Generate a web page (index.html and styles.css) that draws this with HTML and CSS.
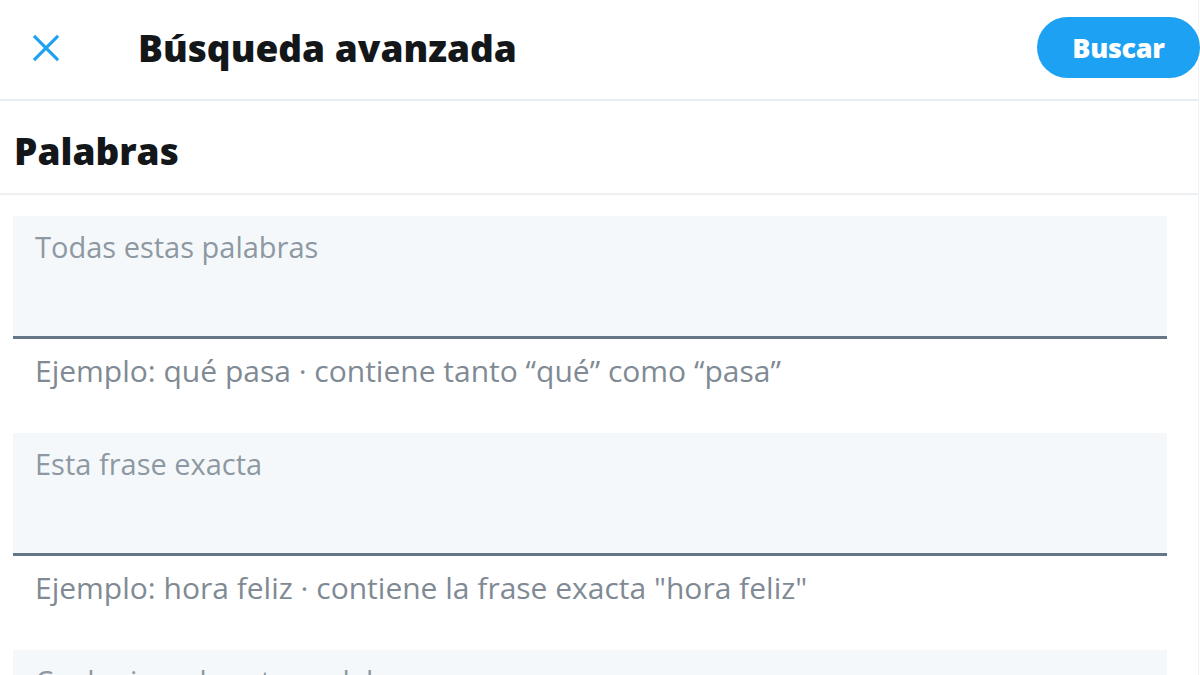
FILE: index.html
```html
<!DOCTYPE html>
<html lang="es">
<head>
  <meta charset="UTF-8" />
  <meta name="viewport" content="width=device-width, initial-scale=1.0"/>
  <title>Búsqueda avanzada</title>
  <link rel="stylesheet" href="styles.css">
</head>
<body>

<div class="container">
  <!-- Top bar -->
  <div class="topbar">
    <button class="close" type="button" aria-label="Cerrar">
      <svg viewBox="0 0 24 24" width="34" height="34">
        <path d="M3.5 3.5 L20.5 20.5 M20.5 3.5 L3.5 20.5" />
      </svg>
    </button>
    <h1 class="title">Búsqueda avanzada</h1>
    <button class="search-btn" type="submit">Buscar</button>
  </div>

  <h2 class="section-title">Palabras</h2>

  <form class="fields">
    <div class="field">
      <label class="field-box">
        <span class="field-label">Todas estas palabras</span>
        <input type="text" name="all">
      </label>
      <p class="hint">Ejemplo: qué pasa · contiene tanto “qué” como “pasa”</p>
    </div>
    <div class="field">
      <label class="field-box">
        <span class="field-label">Esta frase exacta</span>
        <input type="text" name="phrase">
      </label>
      <p class="hint">Ejemplo: hora feliz · contiene la frase exacta "hora feliz"</p>
    </div>
    <div class="field">
      <label class="field-box">
        <span class="field-label">Cualquiera de estas palabras</span>
        <input type="text" name="any">
      </label>
    </div>
  </form>
</div>

</body>
</html>
```

FILE: styles.css
```css
body {
  font-family: "Open Sans", "Noto Sans", sans-serif;
  background-color: #fff;
  margin: 0;
  padding: 0;
  color: #14171a;
  overflow: hidden;
}
.container {
  width: 1198px;
  height: 675px;
  border-right: 1px solid #f0f3f5;
}
.topbar {
  display: flex;
  align-items: center;
  height: 99px;
  padding: 0 0 0 24px;
  border-bottom: 2px solid #e6ecf0;
}
.close {
  background: none;
  border: none;
  padding: 0;
  width: 44px;
  height: 44px;
  margin-top: -4px;
  display: flex;
  align-items: center;
  justify-content: center;
  cursor: pointer;
}
.close path {
  stroke: #1da1f2;
  stroke-width: 2.2;
  fill: none;
}
.title {
  margin: -4px 0 0 70px;
  font-size: 37px;
  font-weight: 800;
  letter-spacing: 0;
  flex: 1;
}
.search-btn {
  width: 163px;
  height: 61px;
  margin: -4px -2px 0 0;
  border: none;
  border-radius: 31px;
  background-color: #1da1f2;
  color: #fff;
  font-family: inherit;
  font-size: 27px;
  font-weight: 800;
  letter-spacing: -0.3px;
  cursor: pointer;
}
.section-title {
  margin: 0;
  padding: 0 14px;
  height: 92px;
  line-height: 100px;
  font-size: 37px;
  font-weight: 800;
  border-bottom: 2px solid #eef1f3;
}
.fields {
  padding: 21px 31px 0 13px;
}
.field {
  height: 217px;
}
.field-box {
  display: block;
  position: relative;
  height: 120px;
  background-color: #f5f8fa;
  border-bottom: 3px solid #657786;
}
.field-label {
  display: block;
  padding: 11px 0 0 22px;
  font-size: 29px;
  color: #8d98a3;
}
.field-box input {
  position: absolute;
  left: 22px;
  right: 22px;
  bottom: 8px;
  border: none;
  background: transparent;
  outline: none;
  font-size: 26px;
}
.hint {
  margin: 0;
  padding: 11px 0 0 22px;
  font-size: 30px;
  color: #7f8a94;
}
```
